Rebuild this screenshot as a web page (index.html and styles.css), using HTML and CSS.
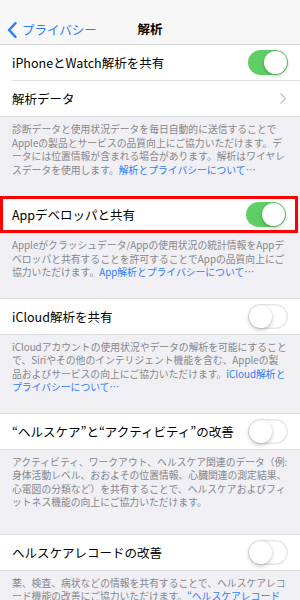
FILE: index.html
```html
<!DOCTYPE html>
<html lang="ja">
<head>
    <meta charset="UTF-8">
    <meta name="viewport" content="width=device-width, initial-scale=1.0">
    <title>解析</title>
    <link rel="stylesheet" href="styles.css">
</head>
<body>
    <header class="nav">
        <a class="back" href="#">
            <svg width="10" height="16" viewBox="0 0 10 16"><path d="M8.5 1.2 L2 8 L8.5 14.8" fill="none" stroke="#2f7cf6" stroke-width="2.4" stroke-linecap="round" stroke-linejoin="round"/></svg>
            <span>プライバシー</span>
        </a>
        <div class="title">解析</div>
    </header>

    <section class="group first">
        <div class="row">
            <span class="label">iPhoneとWatch解析を共有</span>
            <span class="toggle on"></span>
        </div>
        <div class="row">
            <span class="label">解析データ</span>
            <svg class="chevron" width="7" height="11" viewBox="0 0 7 11"><path d="M1 1 L5.5 5.5 L1 10" fill="none" stroke="#c4c4c9" stroke-width="1.4" stroke-linecap="round" stroke-linejoin="round"/></svg>
        </div>
    </section>
    <p class="note lead">診断データと使用状況データを毎日自動的に送信することでAppleの製品とサービスの品質向上にご協力いただけます。データには位置情報が含まれる場合があります。解析はワイヤレスデータを使用します。<a href="#">解析とプライバシーについて…</a></p>

    <section class="group marked">
        <div class="row">
            <span class="label">Appデベロッパと共有</span>
            <span class="toggle on"></span>
        </div>
    </section>
    <p class="note">Appleがクラッシュデータ/Appの使用状況の統計情報をAppデベロッパと共有することを許可することでAppの品質向上にご協力いただけます。<a href="#">App解析とプライバシーについて…</a></p>

    <section class="group">
        <div class="row">
            <span class="label">iCloud解析を共有</span>
            <span class="toggle"></span>
        </div>
    </section>
    <p class="note">iCloudアカウントの使用状況やデータの解析を可能にすることで、Siriやその他のインテリジェント機能を含む、Appleの製品およびサービスの向上にご協力いただけます。<a href="#">iCloud解析とプライバシーについて…</a></p>

    <section class="group">
        <div class="row">
            <span class="label">“ヘルスケア”と“アクティビティ”の改善</span>
            <span class="toggle"></span>
        </div>
    </section>
    <p class="note tall">アクティビティ、ワークアウト、ヘルスケア関連のデータ（例: 身体活動レベル、おおよその位置情報、心臓関連の測定結果、心電図の分類など）を共有することで、ヘルスケアおよびフィットネス機能の向上にご協力いただけます。</p>

    <section class="group">
        <div class="row">
            <span class="label">ヘルスケアレコードの改善</span>
            <span class="toggle"></span>
        </div>
    </section>
    <p class="note">薬、検査、病状などの情報を共有することで、ヘルスケアレコード機能の改善にご協力いただけます。<a href="#">“ヘルスケアレコードとプライバシーについて…”</a></p>
</body>
</html>
```

FILE: styles.css
```css
body {
    margin: 0;
    background: #efeff4;
    font-family: "Noto Sans CJK JP", "Noto Sans", sans-serif;
    color: #000;
}

a {
    color: #2f7cf6;
    text-decoration: none;
}

.nav {
    height: 32px;
    padding-top: 12px;
    background: #f7f7f8;
    border-bottom: 1px solid #d6d6da;
    display: flex;
    align-items: center;
    justify-content: center;
    position: relative;
}

.back {
    position: absolute;
    left: 7px;
    top: 20px;
    display: flex;
    align-items: center;
    gap: 5px;
    font-size: 12.5px;
}

.title {
    font-size: 12.5px;
    font-weight: bold;
}

.group {
    background: #fff;
    border-top: 1px solid #dcdce0;
    border-bottom: 1px solid #dcdce0;
}

.group.first {
    border-top: none;
}

.row {
    height: 35px;
    display: flex;
    align-items: center;
    justify-content: space-between;
    padding: 0 12px;
    font-size: 12.5px;
}

.row + .row {
    border-top: 1px solid #e2e2e6;
    margin-left: 12px;
    padding-left: 0;
}

.chevron {
    margin-right: 1px;
}

.toggle {
    width: 40px;
    height: 25px;
    border-radius: 13px;
    background: #fff;
    box-shadow: inset 0 0 0 1.5px #e5e5ea;
    position: relative;
    flex-shrink: 0;
}

.toggle::after {
    content: "";
    position: absolute;
    top: 1px;
    left: 1px;
    width: 23px;
    height: 23px;
    border-radius: 50%;
    background: #fff;
    box-shadow: 0 2px 4px rgba(0, 0, 0, 0.22), 0 0 0 0.5px rgba(0, 0, 0, 0.06);
}

.toggle.on {
    background: #5fcf65;
    box-shadow: none;
}

.toggle.on::after {
    left: 16px;
}

.marked {
    outline: 3px solid #f00;
    outline-offset: -3px;
    margin-right: 2px;
}

.note {
    margin: 0;
    padding: 6px 12px 18px;
    font-size: 9.8px;
    line-height: 13.5px;
    color: #86868b;
}

.note.lead {
    padding-bottom: 19px;
}

.note.tall {
    padding-bottom: 24px;
}
```
